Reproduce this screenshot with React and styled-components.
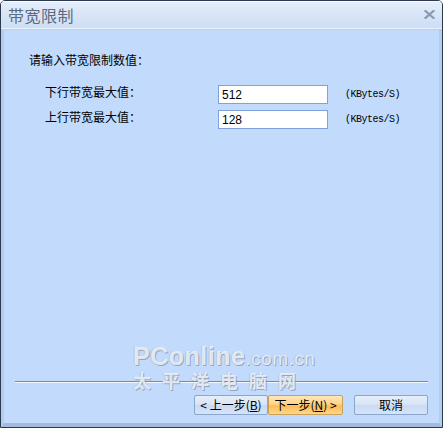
import React from "react";
import styled, { createGlobalStyle } from "styled-components";

const GlobalStyle = createGlobalStyle`
  html, body {
    margin: 0;
    padding: 0;
    background: #ffffff;
  }
  #root {
    width: 443px;
    height: 428px;
  }
`;

const limits = [
  { label: "下行带宽最大值：", value: "512" },
  { label: "上行带宽最大值：", value: "128" },
];

const App = () => {
  return (
    <>
      <GlobalStyle />
      <Window>
        <TitleBar>
          <Title>带宽限制</Title>
          <CloseButton aria-label='close'>
            <svg width='11' height='9' viewBox='0 0 11 9'>
              <path
                d='M1.5 1 L9.5 8 M9.5 1 L1.5 8'
                stroke='#8a9ab0'
                strokeWidth='2.2'
                strokeLinecap='square'
              />
            </svg>
          </CloseButton>
        </TitleBar>
        <Body>
          <Prompt>请输入带宽限制数值：</Prompt>
          <Form>
            {limits.map((item) => (
              <React.Fragment key={item.label}>
                <Label>{item.label}</Label>
                <Field defaultValue={item.value} />
                <Unit>(KBytes/S)</Unit>
              </React.Fragment>
            ))}
          </Form>
          <Spacer />
          <Separator />
          <ButtonRow>
            <Button>
              &lt; 上一步(<u>B</u>)
            </Button>
            <Button $primary>
              下一步(<u>N</u>) &gt;
            </Button>
            <Button $gap>取消</Button>
          </ButtonRow>
        </Body>
        <Watermark>
          <Brand>
            PConline<span>.com.cn</span>
          </Brand>
          <BrandCn>太平洋电脑网</BrandCn>
        </Watermark>
      </Window>
    </>
  );
};

const Window = styled.div`
  position: relative;
  box-sizing: border-box;
  width: 443px;
  height: 428px;
  border: 1px solid #2c3a4e;
  border-radius: 5px 5px 0 0;
  overflow: hidden;
  display: flex;
  flex-direction: column;
  background: #c2dbfc;
  font-family: "Noto Sans CJK SC", "Liberation Sans", sans-serif;
`;

const TitleBar = styled.div`
  height: 27px;
  flex-shrink: 0;
  display: flex;
  align-items: center;
  justify-content: space-between;
  padding: 0 5px 0 7px;
  background: linear-gradient(#e6eefa 0%, #d9e6f7 45%, #cddef5 100%);
  border-bottom: 1px solid #eef4fc;
  box-shadow: inset 0 1px 0 #f6f9fe;
`;

const Title = styled.div`
  font-size: 16px;
  color: #5c6a7e;
  letter-spacing: 0.5px;
  line-height: 20px;
`;

const CloseButton = styled.div`
  display: flex;
  align-items: center;
  justify-content: center;
  width: 16px;
  height: 16px;
`;

const Body = styled.div`
  flex: 1;
  display: flex;
  flex-direction: column;
  border-left: 3px solid #b2cdf3;
  border-right: 3px solid #b2cdf3;
  border-bottom: 4px solid #a3badd;
  border-top: 1px solid #b5cff4;
  background: #c2dbfc;
`;

const Prompt = styled.div`
  margin: 22px 0 0 25px;
  font-size: 12px;
  line-height: 16px;
  color: #000;
`;

const Form = styled.div`
  display: grid;
  grid-template-columns: 156px 110px auto;
  column-gap: 17px;
  row-gap: 6px;
  align-items: start;
  margin: 17px 0 0 41px;
`;

const Label = styled.div`
  font-size: 12px;
  line-height: 16px;
  color: #000;
  margin-top: -1px;
`;

const Field = styled.input`
  box-sizing: border-box;
  width: 110px;
  height: 19px;
  border: 1px solid #7ea2dc;
  background: #fff;
  padding: 0 3px;
  font-family: "Liberation Sans", sans-serif;
  font-size: 12px;
  color: #000;
  outline: none;
`;

const Unit = styled.div`
  font-family: "Liberation Mono", monospace;
  font-size: 10px;
  letter-spacing: -0.5px;
  line-height: 19px;
  color: #000;
`;

const Spacer = styled.div`
  flex: 1;
`;

const Separator = styled.div`
  margin: 0 11px;
  height: 1px;
  background: #6d8cbc;
  border-bottom: 1px solid #f2f7fe;
`;

const Button = styled.button`
  box-sizing: border-box;
  width: ${(p) => (p.$primary ? "75px" : "74px")};
  height: 20px;
  margin-left: ${(p) => (p.$gap ? "11px" : "0")};
  padding: 0;
  border: 1px solid ${(p) => (p.$primary ? "#c9a25a" : "#8aa6cf")};
  border-radius: 2px;
  background: ${(p) =>
    p.$primary
      ? "linear-gradient(#ffe7b8 0%, #ffd38a 45%, #fdbd55 55%, #ffd58c 100%)"
      : "linear-gradient(#e6eefa 0%, #d9e5f6 45%, #c9daf3 55%, #d6e4f7 100%)"};
  font-family: "Noto Sans CJK SC", "Liberation Sans", sans-serif;
  font-size: 12px;
  line-height: 16px;
  color: #000;
  u {
    text-decoration: underline;
  }
`;

const ButtonRow = styled.div`
  display: flex;
  justify-content: flex-end;
  padding: 12px 11px 8px 0;
`;

const Watermark = styled.div`
  position: absolute;
  left: 132px;
  top: 343px;
  pointer-events: none;
  color: rgba(240, 244, 250, 0.85);
  text-shadow: 1px 1px 0 rgba(110, 122, 140, 0.55),
    -1px 0 0 rgba(150, 160, 175, 0.35);
`;

const Brand = styled.div`
  font-family: "Liberation Sans", sans-serif;
  font-size: 25px;
  font-weight: bold;
  line-height: 24px;
  letter-spacing: 0.5px;
  span {
    font-size: 19px;
    font-weight: normal;
    letter-spacing: 0.5px;
  }
`;

const BrandCn = styled.div`
  font-family: "Noto Sans CJK SC", sans-serif;
  font-size: 18px;
  line-height: 18px;
  font-weight: bold;
  letter-spacing: 11px;
`;

export default App;
